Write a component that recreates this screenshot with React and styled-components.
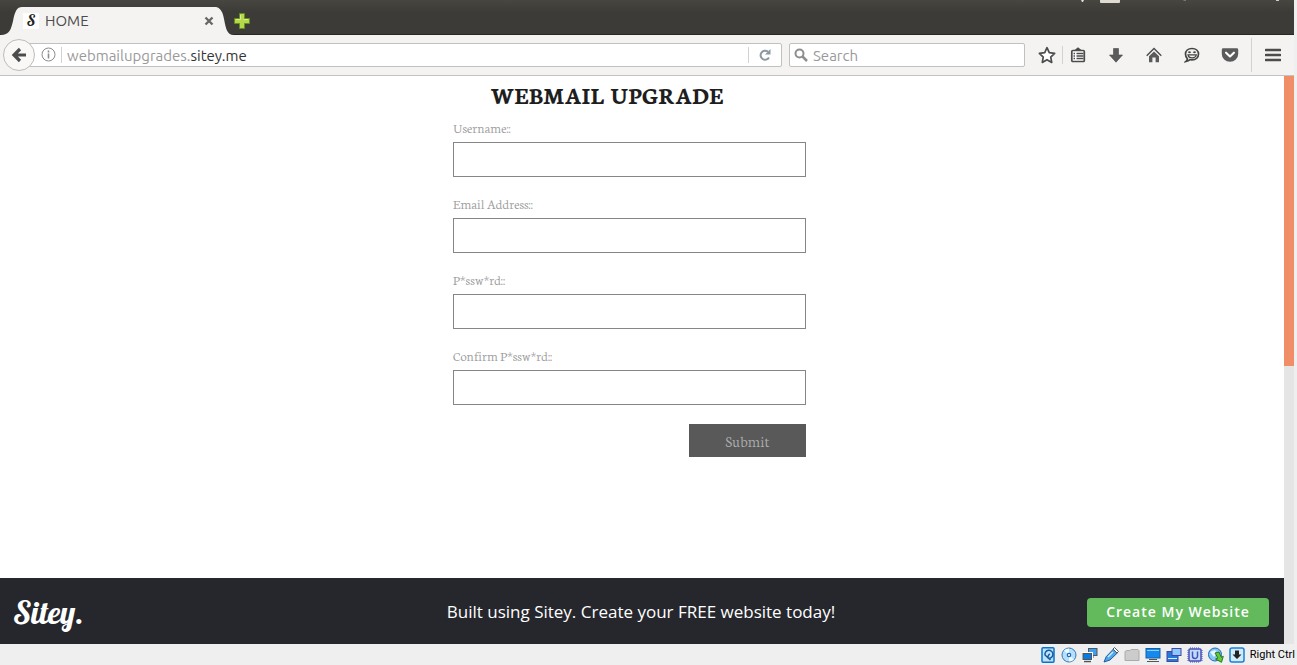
import React from "react";
import styled, { createGlobalStyle } from "styled-components";

const GlobalStyle = createGlobalStyle`
  *, *::before, *::after { box-sizing: border-box; }
  body { margin: 0; background: #efefef; }
  button, input { font: inherit; }
`;

const uiFont = `Ubuntu, "Noto Sans", sans-serif`;
const serifFont = `Neuton, "Liberation Serif", serif`;
const scriptFont = `Lobster, "Kaushan Script", Lato, sans-serif`;

const Desktop = styled.div`
  display: flex;
  flex-direction: column;
  min-height: 100vh;
`;

const Browser = styled.div`
  display: flex;
  flex-direction: column;
  flex: 1;
  margin-right: 3px;
`;

const TabStrip = styled.header`
  display: flex;
  align-items: flex-end;
  height: 35px;
  background: linear-gradient(#474640 0, #3c3b37 12px);
  box-shadow: inset 0 -1px #282724;
`;

const Shoulder = styled.svg`
  display: block;
  width: ${(p) => p.$width}px;
  height: 28px;
  flex: none;
`;

const Tab = styled.div`
  display: flex;
  align-items: center;
  width: 194px;
  height: 28px;
  padding-left: 1px;
  gap: 6px;
  background: #f4f3f2;
  color: #4c4c4c;
  font: 15px/28px ${uiFont};
`;

const Favicon = styled.span`
  width: 16px;
  height: 16px;
  background: #fff;
  color: #222;
  font: 15px/16px ${scriptFont};
  text-align: center;
`;

const TabTitle = styled.span`
  flex: 1;
`;

const IconButton = styled.button`
  display: flex;
  align-items: center;
  justify-content: center;
  flex: none;
  width: ${(p) => p.$width || 30}px;
  height: ${(p) => p.$height || 30}px;
  padding: 0;
  border: 0;
  background: transparent;
  color: #4c4c4c;
`;

const PanelSliver = styled.svg`
  align-self: flex-start;
  margin-left: auto;
  width: 216px;
  height: 4px;
`;

const NavBar = styled.nav`
  display: flex;
  align-items: center;
  height: 41px;
  padding: 0 6px 1px 3px;
  background: #f4f3f2;
  border-bottom: 1px solid #c3c2c1;
`;

const BackButton = styled.button`
  display: flex;
  align-items: center;
  justify-content: center;
  flex: none;
  z-index: 1;
  width: 32px;
  height: 32px;
  padding: 0;
  border: 1px solid #bdbcba;
  border-radius: 50%;
  background: #f9f8f7;
`;

const Field = styled.div`
  display: flex;
  align-items: center;
  height: 24px;
  border: 1px solid #c2c1bf;
  border-radius: 2px;
  background: #fff;
  color: #999;
  font: 15px/22px ${uiFont};
`;

const AddressField = styled(Field)`
  flex: 1;
  min-width: 0;
  margin-left: -8px;
  padding-left: 13px;
`;

const Address = styled.a`
  flex: 1;
  min-width: 0;
  padding: 2px 0 0 5px;
  overflow: hidden;
  white-space: nowrap;
  color: #999;
  text-decoration: none;

  strong {
    color: #333;
    font-weight: 400;
  }
`;

const SearchField = styled(Field)`
  width: 236px;
  margin: 0 7px;
  padding-left: 4px;
  gap: 5px;
`;

const SearchInput = styled.input`
  flex: 1;
  min-width: 0;
  padding: 2px 0 0;
  border: 0;
  outline: 0;
  background: transparent;

  &::placeholder {
    color: #999;
    opacity: 1;
  }
`;

const Divider = styled.span`
  flex: none;
  width: 1px;
  height: ${(p) => p.$height}px;
  margin-left: ${(p) => p.$gap || 0}px;
  background: #d3d2d0;
`;

const Tools = styled.div`
  display: flex;
  align-items: center;
  gap: 8px;
  margin-right: 6px;
`;

const MenuButton = styled(IconButton)`
  margin-left: 6px;
`;

const Viewport = styled.div`
  display: flex;
  flex: 1;
`;

const Page = styled.div`
  display: flex;
  flex-direction: column;
  flex: 1;
  background: #fff;
`;

const ScrollTrack = styled.div`
  width: 10px;
  background: linear-gradient(#f08e68 290px, #e5e5e5 0);
`;

const Main = styled.main`
  flex: 1;
  padding: 5px 25px 0 0;
  font-family: ${serifFont};
`;

const Heading = styled.h1`
  margin: 0 45px 10px 0;
  color: #1e1e1e;
  font-size: 24px;
  line-height: 28px;
  text-align: center;
`;

const Form = styled.form`
  display: flex;
  flex-direction: column;
  width: 353px;
  margin: 0 auto;
  font-weight: 300;
`;

const FormRow = styled.div`
  display: flex;
  flex-direction: column;
  gap: 5px;
  margin-bottom: 18px;

  label {
    color: #999;
    font-size: 14px;
    line-height: 18px;
  }

  input {
    height: 35px;
    padding: 0 8px;
    border: 1px solid #868686;
    border-radius: 0;
    background: #fff;
    outline: 0;
  }
`;

const Submit = styled.button`
  align-self: flex-end;
  width: 117px;
  height: 33px;
  margin-top: 1px;
  padding: 0;
  border: 0;
  background: #595959;
  color: #b0b0b0;
  font-size: 16px;
  line-height: 20px;
`;

const PromoBar = styled.footer`
  display: grid;
  grid-template-columns: 1fr auto 1fr;
  align-items: center;
  height: 66px;
  padding: 2px 15px 0 13px;
  background: #26272c;
  color: #fff;
  font: 17px/24px "Open Sans", sans-serif;
`;

const Logo = styled.a`
  justify-self: start;
  color: #fff;
  font: 32px/34px ${scriptFont};
  text-decoration: none;
`;

const PromoButton = styled.button`
  justify-self: end;
  width: 182px;
  height: 29px;
  padding: 0;
  border: 0;
  border-radius: 4px;
  background: #62ba5c;
  color: #fff;
  font-size: 14px;
  font-weight: 600;
  letter-spacing: 1px;
  line-height: 28px;
`;

const StatusBar = styled.div`
  display: flex;
  align-items: center;
  justify-content: flex-end;
  gap: 5px;
  height: 21px;
  padding-right: 2px;
  background: #efefef;
  color: #000;
  font: 11px/20px Tahoma, Roboto, sans-serif;
`;

const Svg = ({ size = 16, children }) => (
  <svg width={size} height={size} viewBox="0 0 16 16" fill="none" aria-hidden="true">
    {children}
  </svg>
);

const StarIcon = () => (
  <Svg size={18}>
    <path d="M8 1.500l2 4.400 4.800.6-3.500 3.300.9 4.800L8 12.200l-4.200 2.400.9-4.800L1.200 6.500 6 5.900z" stroke="#4c4c4c" strokeWidth="1.500" strokeLinejoin="round" fill="#fff" />
  </Svg>
);
const ListIcon = () => (
  <Svg>
    <rect x="1.800" y="3.500" width="12.500" height="11" rx="1" stroke="#4c4c4c" strokeWidth="1.700" fill="#fff" />
    <path d="M4 3.500L8 .3l4 3.200z" fill="#4c4c4c" />
    <path d="M3.500 6.500h1.500M6.500 6.500h7M3.500 9h1.500M6.500 9h7M3.500 11.500h1.500M6.500 11.500h7" stroke="#4c4c4c" strokeWidth="1.400" />
  </Svg>
);
const DownIcon = () => (
  <Svg>
    <path d="M5.500 1.500h5V8h4L8 15.200 1.500 8h4z" fill="#5b5b5b" stroke="#484848" strokeWidth=".6" />
  </Svg>
);
const HomeIcon = () => (
  <Svg>
    <path d="M.7 8.700L8 1.600l7.300 7.100" stroke="#4c4c4c" strokeWidth="1.400" />
    <path d="M3 9.300l5-4.800 5 4.800v5.900H9.600v-4.700H6.400v4.700H3z" fill="#5b5b5b" />
  </Svg>
);
const SmileIcon = () => (
  <Svg>
    <path d="M8 1.500c4 0 6.500 2.300 6.500 5.600S12 12.900 8 12.900c-.8 0-1.300-.1-2-.2-1 .9-2.200 1.500-4 1.800.8-.7 1.300-1.600 1.300-2.800C2 10.500 1.500 9 1.500 7.100c0-3.300 2.500-5.600 6.500-5.600z" fill="#f4f3f2" stroke="#444" strokeWidth="1.700" />
    <path d="M4.500 5.800q1-1.500 2 0M9.500 5.800q1-1.500 2 0" stroke="#444" strokeWidth="1.700" />
    <path d="M4 7.800h8.300c-.4 2-2 3-4.200 3S4.300 9.800 4 7.800z" stroke="#444" strokeWidth="1.200" />
  </Svg>
);
const PocketIcon = () => (
  <Svg size={18}>
    <path d="M2 2h12q1.300 0 1.300 1.300V7A7.300 7 0 0 1 .7 7V3.300Q.7 2 2 2z" fill="#5b5b5b" />
    <path d="M4.500 6L8 9.300 11.500 6" stroke="#fff" strokeWidth="1.900" strokeLinecap="round" strokeLinejoin="round" />
  </Svg>
);
const MenuIcon = () => (
  <Svg>
    <path d="M1 3h14M1 8h14M1 13h14" stroke="#4c4c4c" strokeWidth="2.600" strokeLinecap="round" />
  </Svg>
);

const statusIcons = [
  ["Hard disks", <g key="d"><rect x="2" y=".8" width="12" height="14.400" rx="1" fill="#bfe2fb" stroke="#0873cf" strokeWidth="1.500" /><path d="M5 8a4 4 0 1 1 4 3.300c-2 0-1-3 .8-4.500M5 8l5.500 5" stroke="#175d9e" strokeWidth="1.500" /></g>],
  ["Optical drives", <g key="o"><circle cx="8" cy="8" r="7" fill="#b7dffa" stroke="#2b7bc0" /><path d="M8 8L3 3.500A7 7 0 0 1 8 1.500zM8 8l5 4.500A7 7 0 0 1 8 14.500z" fill="#eefaff" /><circle cx="8" cy="8" r="1.700" fill="#fff" stroke="#1769ba" strokeWidth="1.200" /></g>],
  ["Network", <g key="n"><rect x="6.500" y="1.500" width="8.500" height="7" fill="#3ba0f2" stroke="#555" /><path d="M11 9v2" stroke="#555" /><rect x="1" y="6.500" width="8.500" height="6" fill="#087ce0" stroke="#fff" strokeWidth="3" /><rect x="1" y="6.500" width="8.500" height="6" fill="#087ce0" stroke="#555" /><path d="M2 14.500h7" stroke="#555" strokeWidth="1.500" /></g>],
  ["USB", <g key="u"><path d="M1 15l2.200-5.300L10.500 2l4 3.800L7 13z" fill="#4ba8f0" stroke="#245b9a" /><path d="M10 2l1.500-1.500 4 4L14 6z" fill="#fff" stroke="#555" /><path d="M5 10l5-5" stroke="#c9ecff" strokeWidth="1.500" /></g>],
  ["Shared folders", <path key="f" d="M1 13.500v-9l2-1h3l1-1h7l1 1v10z" fill="#ccc" stroke="#aaa" />],
  ["Display", <g key="m"><rect x="1" y="1.500" width="14" height="9.500" fill="#1689ee" stroke="#1760a8" /><path d="M2 3.500h12" stroke="#8bd0ff" /><path d="M4 12.500h8M2 14.500h12" stroke="#555" /></g>],
  ["Video capture", <g key="v"><rect x="1" y="4.500" width="11" height="10" fill="#2878d7" stroke="#4146a4" /><rect x="6" y="1.500" width="9" height="7" fill="#8cc8fc" stroke="#4146a4" /><path d="M2 11.500h9" stroke="#d9eeff" /></g>],
  ["Processor", <g key="p"><rect x="2" y="2" width="12" height="12" rx="1" fill="#c2dbfa" stroke="#4850ba" strokeWidth="1.500" /><path d="M1 3v11M15 3v11M3 1h10M3 15h10" stroke="#4850ba" strokeDasharray="1 1" /><path d="M5.500 4.500V9a2.500 2.500 0 0 0 5 0V4.500" stroke="#4850ba" strokeWidth="1.500" /></g>],
  ["Mouse integration", <g key="i"><circle cx="7" cy="7.500" r="6.500" fill="#8bc7f4" stroke="#1769ba" /><path d="M2 5l5-2 2 3-3 4z" fill="#e7f7ff" /><path d="M7 6l3 5-2.500 1 6 3.300 1.800-6-2 1L11 5z" fill="#63cb37" stroke="#287722" /></g>],
  ["Keyboard capture", <g key="k"><rect x="1" y="1" width="14" height="14" rx="2" fill="#d2ebfc" stroke="#1980d3" strokeWidth="1.500" /><path d="M6 3.500h4v4h2.500L8 12 3.500 7.500H6z" fill="#222" /></g>],
];

const fields = [
  ["username", "Username::", "text"],
  ["email", "Email Address::", "text"],
  ["password", "P*ssw*rd::", "password"],
  ["confirm", "Confirm P*ssw*rd::", "password"],
];

export default function App() {
  return (
    <Desktop>
      <GlobalStyle />
      <Browser>
        <TabStrip>
          <Shoulder $width={22} viewBox="0 0 22 28">
            <path d="M0 28C10 28 11 22 13 14 15 4 17 0 22 0V28z" fill="#f4f3f2" />
          </Shoulder>
          <Tab>
            <Favicon>S</Favicon>
            <TabTitle>HOME</TabTitle>
            <IconButton aria-label="Close tab" $width={14} $height={20}>
              <svg width="10" height="10" viewBox="0 0 10 10">
                <path d="M1.500 1.500l7 7M8.500 1.500l-7 7" stroke="#666" strokeWidth="2.300" />
              </svg>
            </IconButton>
          </Tab>
          <Shoulder $width={18} viewBox="0 0 18 28">
            <path d="M0 0C5 1 7 6 8 12 10 22 11 28 18 28H0z" fill="#f4f3f2" />
          </Shoulder>
          <IconButton aria-label="New tab" $width={16} $height={28}>
            <svg width="16" height="16" viewBox="0 0 16 16">
              <path d="M5.500.5h5v5h5v5h-5v5h-5v-5h-5v-5h5z" fill="#b4d84a" stroke="#638f22" />
              <path d="M6.500 2v4.500H2M9.500 6.500H14" fill="none" stroke="#d8ee8c" />
            </svg>
          </IconButton>
          <PanelSliver viewBox="0 0 216 4">
            <path d="M3 0h3l-1 2H4z" fill="#ddd" />
            <rect x="22" y="-3" width="20" height="6" rx="1" fill="#dfdbd2" />
            <path d="M105 0h3v1h-2z" fill="#777" />
            <path d="M198 0h3v1h-3z" fill="#ccc" />
          </PanelSliver>
        </TabStrip>

        <NavBar>
          <BackButton aria-label="Back">
            <Svg>
              <path d="M9 2L3 8l6 6M3.500 8H15" stroke="#4c4c4c" strokeWidth="3.200" />
            </Svg>
          </BackButton>
          <AddressField>
            <svg width="15" height="15" viewBox="0 0 15 15" fill="none" aria-hidden="true">
              <circle cx="7.500" cy="7.500" r="6.500" stroke="#8c8c8c" />
              <path d="M7.500 6.500v5M7.500 3.500v2" stroke="#8c8c8c" strokeWidth="1.600" />
            </svg>
            <Divider $height={16} $gap={5} />
            <Address href="#">
              webmailupgrades.<strong>sitey.me</strong>
            </Address>
            <Divider $height={16} />
            <IconButton aria-label="Reload" $width={32} $height={22}>
              <svg width="14" height="14" viewBox="0 0 14 14" fill="none">
                <path d="M11 9.500A4.500 4.500 0 1 1 10 3.800" stroke="#8c99a3" strokeWidth="2" />
                <path d="M12.500 1v5.500H7z" fill="#8c99a3" />
              </svg>
            </IconButton>
          </AddressField>
          <SearchField>
            <svg width="14" height="14" viewBox="0 0 14 14" fill="none" aria-hidden="true">
              <circle cx="5.500" cy="5.500" r="4" stroke="#8e8e8e" strokeWidth="2" />
              <path d="M8.500 8.500L13 13" stroke="#8e8e8e" strokeWidth="2.500" />
            </svg>
            <SearchInput aria-label="Search" placeholder="Search" />
          </SearchField>
          <IconButton aria-label="Bookmark this page"><StarIcon /></IconButton>
          <Divider $height={18} />
          <Tools>
            <IconButton aria-label="Bookmarks"><ListIcon /></IconButton>
            <IconButton aria-label="Downloads"><DownIcon /></IconButton>
            <IconButton aria-label="Home page"><HomeIcon /></IconButton>
            <IconButton aria-label="Chat"><SmileIcon /></IconButton>
            <IconButton aria-label="Pocket"><PocketIcon /></IconButton>
          </Tools>
          <Divider $height={34} />
          <MenuButton aria-label="Menu"><MenuIcon /></MenuButton>
        </NavBar>

        <Viewport>
          <Page>
            <Main>
              <Heading>WEBMAIL UPGRADE</Heading>
              <Form onSubmit={(e) => e.preventDefault()}>
                {fields.map(([id, label, type]) => (
                  <FormRow key={id}>
                    <label htmlFor={id}>{label}</label>
                    <input id={id} type={type} />
                  </FormRow>
                ))}
                <Submit type="submit">Submit</Submit>
              </Form>
            </Main>
            <PromoBar>
              <Logo href="#">Sitey.</Logo>
              <span>Built using Sitey. Create your FREE website today!</span>
              <PromoButton>Create My Website</PromoButton>
            </PromoBar>
          </Page>
          <ScrollTrack />
        </Viewport>
      </Browser>
      <StatusBar>
        {statusIcons.map(([name, drawing]) => (
          <svg key={name} width="16" height="16" viewBox="0 0 16 16" fill="none" role="img" aria-label={name}>
            {drawing}
          </svg>
        ))}
        <span>Right Ctrl</span>
      </StatusBar>
    </Desktop>
  );
}
